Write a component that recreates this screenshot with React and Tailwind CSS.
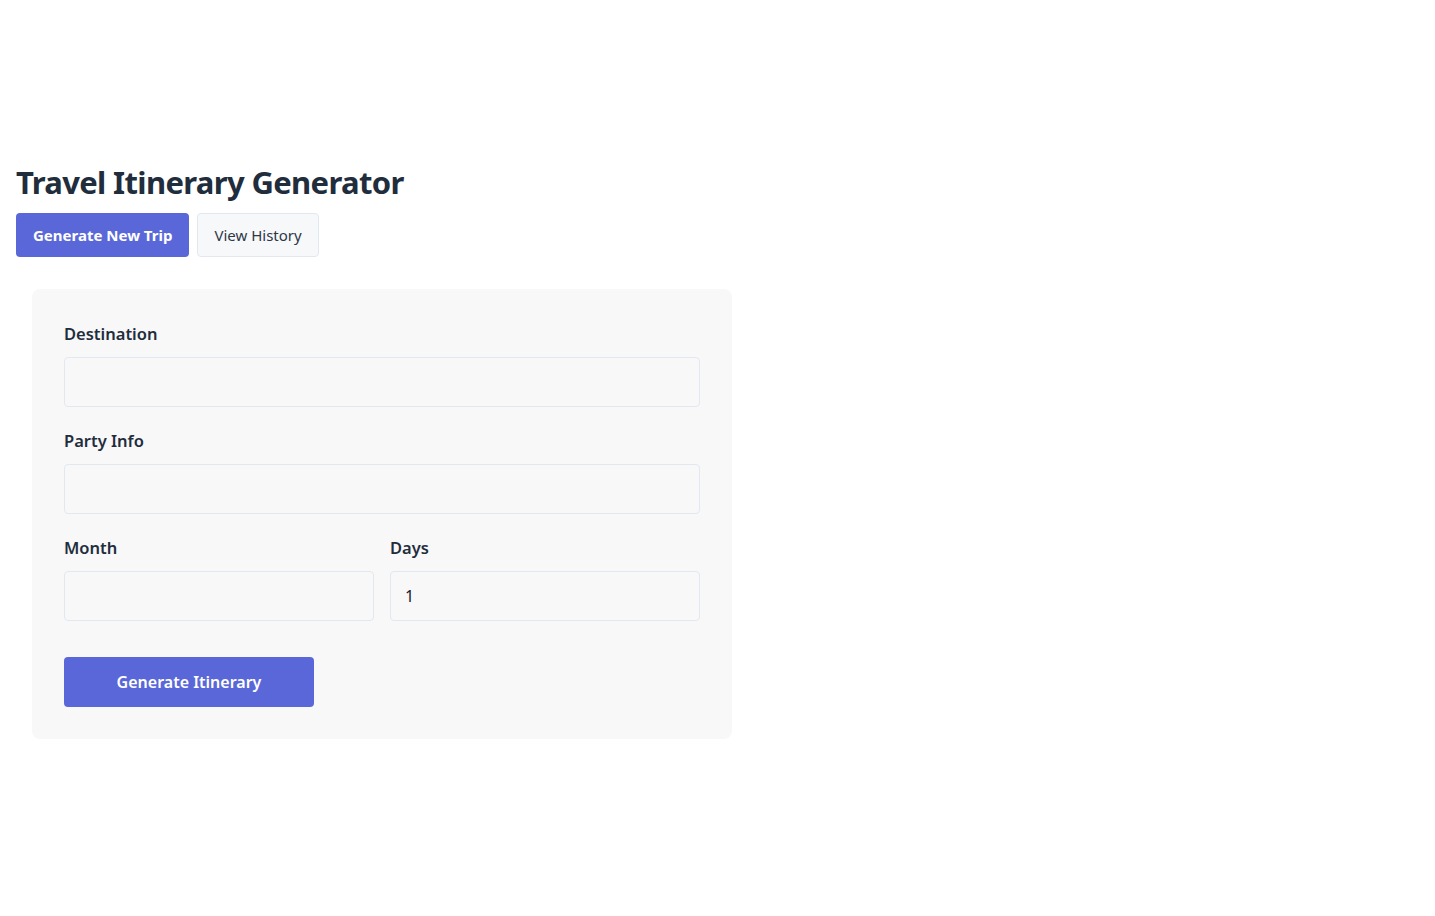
export default function App() {
  return (
    <div className="min-h-screen bg-white font-['Noto_Sans',sans-serif] text-[#1f2d3d]">
      <div className="px-4 pt-[160px]">
        <h1 className="text-[31px] font-bold leading-[44px] tracking-[-0.65px] text-[#1f2d3d]">Travel Itinerary Generator</h1>
        <div className="mt-[9px] flex gap-2">
          <button className="h-11 rounded bg-[#5a67d8] px-[17px] text-[15px] font-bold text-white">Generate New Trip</button>
          <button className="h-11 rounded border border-[#e2e8f0] bg-[#f7f8fa] px-4 text-[15px] text-[#2d3748]">View History</button>
        </div>
      </div>

      <form className="ml-8 mt-8 w-[700px] rounded-lg bg-[#f8f8f9] px-8 pb-8 pt-[31px]">
        <div className="mb-5">
          <label className="mb-2.5 block text-[16.5px] font-semibold leading-[27px]">Destination</label>
          <input className="h-[50px] w-full rounded border border-[#e2e8f0] bg-[#f8f8f9] px-[14px] text-base outline-none" />
        </div>
        <div className="mb-5">
          <label className="mb-2.5 block text-[16.5px] font-semibold leading-[27px]">Party Info</label>
          <input className="h-[50px] w-full rounded border border-[#e2e8f0] bg-[#f8f8f9] px-[14px] text-base outline-none" />
        </div>
        <div className="mb-5 grid grid-cols-2 gap-4">
          <div>
            <label className="mb-2.5 block text-[16.5px] font-semibold leading-[27px]">Month</label>
            <input className="h-[50px] w-full rounded border border-[#e2e8f0] bg-[#f8f8f9] px-[14px] text-base outline-none" />
          </div>
          <div>
            <label className="mb-2.5 block text-[16.5px] font-semibold leading-[27px]">Days</label>
            <input defaultValue="1" className="h-[50px] w-full rounded border border-[#e2e8f0] bg-[#f8f8f9] px-[14px] text-base text-[#1a202c] outline-none" />
          </div>
        </div>
        <button type="button" className="mt-4 h-[50px] w-[250px] rounded bg-[#5a67d8] text-base font-semibold text-white">Generate Itinerary</button>
      </form>
    </div>
  );
}
